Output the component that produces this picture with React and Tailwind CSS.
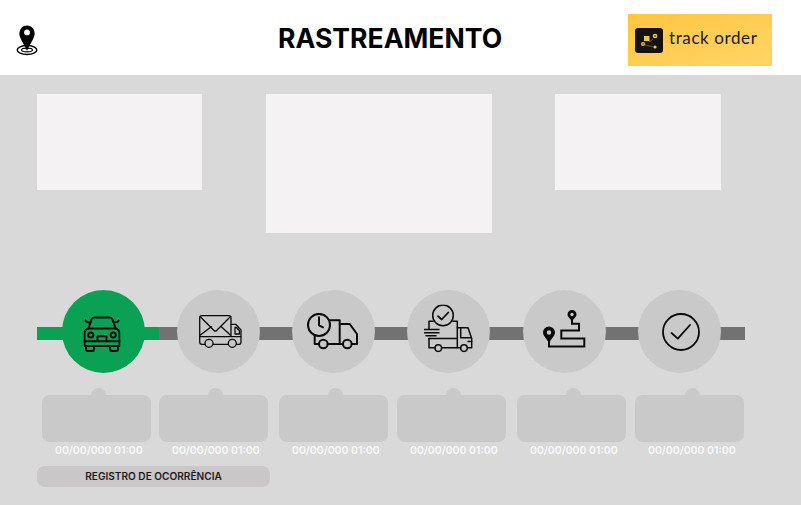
const stroke = { fill: "none", stroke: "#0a0a0a", strokeWidth: 2, strokeLinecap: "round", strokeLinejoin: "round" };

function Car() {
  return (
    <svg width="37" height="36" viewBox="0 0 37 36" {...stroke}>
      <path d="M5 12.500 L8 3.500 Q8.700 1.500 11 1.500 H26 Q28.300 1.500 29 3.500 L32 12.500" />
      <path d="M2 4.500 Q2.500 6.500 6.500 6.500 M35 4.500 Q34.500 6.500 30.500 6.500" />
      <path d="M5 12.500 H32 Q36 13.500 36 18 V30 H1 V18 Q1 13.500 5 12.500 Z" />
      <path d="M1 25.300 H36" />
      <circle cx="7.300" cy="19" r="2.600" />
      <circle cx="29.700" cy="19" r="2.600" />
      <path d="M14 25 V20.300 H23 V25" />
      <path d="M2.500 30 V33 Q2.500 35 4.500 35 H8.500 Q10.500 35 10.500 33 V30" />
      <path d="M26.500 30 V33 Q26.500 35 28.500 35 H32.500 Q34.500 35 34.500 33 V30" />
    </svg>
  );
}

function MailTruck() {
  return (
    <svg width="43" height="33" viewBox="0 0 43 33" {...stroke} strokeWidth="1.300">
      <path d="M0.700 20.700 V2.700 Q0.700 0.700 2.700 0.700 H30 Q32 0.700 32 2.700 V20.700" />
      <path d="M1.300 1.700 L15 15.500 Q16.300 16.800 17.600 15.500 L31.300 1.700" />
      <path d="M1.300 20 L12.300 11.700 M31.300 20 L22.300 11.700" />
      <path d="M0.700 21.700 H41.700" />
      <path d="M0.700 21.700 V27 Q0.700 29.300 3 29.300 H6 M14 29.300 H29.300 M37.300 29.300 H40 Q42 29.300 42 27 V15 L36.700 9.300 H32" />
      <path d="M36 12.500 H37.500 L40.500 16 V19 H36 Z" />
      <circle cx="10" cy="28.300" r="4" />
      <circle cx="33.300" cy="28.300" r="4" />
    </svg>
  );
}

function ClockTruck() {
  return (
    <svg width="51" height="37" viewBox="0 0 51 37" {...stroke}>
      <circle cx="12" cy="11.900" r="11" />
      <path d="M12 4.300 V12.300 L16 14.300" />
      <path d="M22.700 7.300 H32.700 V31 H21 M7.700 22.700 V31 H12" />
      <path d="M32.700 11 H42.700 L50 21 V31 H45" />
      <path d="M32.700 31 H36" />
      <circle cx="16.300" cy="31" r="4.300" />
      <circle cx="40.300" cy="31" r="4.300" />
    </svg>
  );
}

function CheckTruck() {
  return (
    <svg width="49" height="48" viewBox="0 0 49 48" {...stroke} strokeWidth="1.500">
      <circle cx="19" cy="10.900" r="10.300" />
      <path d="M14 11.700 L17.700 15 L24.300 8" strokeWidth="1.800" />
      <path d="M9 16.700 H5 V24 M5 34 V43.300 H11 M17.700 43.300 H36.700 M43.300 43.300 H47.700 V34 L44 23.300 H33.300" />
      <path d="M29 16.700 H33.300 V43.300" />
      <path d="M5 34 H33.300" />
      <path d="M0.500 25 H15 M0.500 28.300 H15 M2 31.300 H12" />
      <path d="M36.700 24 V33.300 H46.500" />
      <path d="M44 37 H47.700" />
      <circle cx="14.300" cy="43.600" r="3.300" />
      <circle cx="40" cy="43.600" r="3.300" />
    </svg>
  );
}

function Route() {
  return (
    <svg width="43" height="39" viewBox="0 0 43 39">
      <path d="M29 10 V14.300 H36 V21 H18.300 V29 H41.300 V37 H6 V30" fill="none" stroke="#0a0a0a" strokeWidth="2" />
      <path fillRule="evenodd" d="M29 0.500 a4.500 4.500 0 0 1 4.500 4.500 c0 2.500 -3 4 -4.500 7 c-1.500 -3 -4.500 -4.500 -4.500 -7 a4.500 4.500 0 0 1 4.500 -4.500z m0 2.800 a1.700 1.700 0 1 0 0 3.400 a1.700 1.700 0 1 0 0 -3.400z" fill="#0a0a0a" />
      <path fillRule="evenodd" d="M6 17 a6 6 0 0 1 6 6 c0 3.500 -4 6.500 -6 10.500 c-2 -4 -6 -7 -6 -10.500 a6 6 0 0 1 6 -6z m0 3.800 a2.200 2.200 0 1 0 0 4.400 a2.200 2.200 0 1 0 0 -4.400z" fill="#0a0a0a" />
    </svg>
  );
}

function Check() {
  return (
    <svg width="38" height="38" viewBox="0 0 38 38" {...stroke} strokeWidth="1.800">
      <circle cx="19" cy="19" r="18" />
      <path d="M9.500 20 L15.800 25.700 L28 12" />
    </svg>
  );
}

function Pin() {
  return (
    <svg width="22" height="31" viewBox="0 0 22 31">
      <ellipse cx="11" cy="25" rx="9.800" ry="4.400" fill="none" stroke="#000" strokeWidth="1.500" />
      <ellipse cx="11" cy="25" rx="5.500" ry="1.900" fill="none" stroke="#000" strokeWidth="1.100" />
      <path fillRule="evenodd" d="M11 0.500 a7.700 7.700 0 0 1 7.700 7.700 c0 5 -5 11 -7.700 17.800 c-2.700 -6.800 -7.700 -12.800 -7.700 -17.800 a7.700 7.700 0 0 1 7.700 -7.700z m0 4 a2.900 2.900 0 1 0 0 5.800 a2.900 2.900 0 1 0 0 -5.800z" fill="#000" />
    </svg>
  );
}

function Logo() {
  return (
    <div className="flex h-[25px] w-[28px] shrink-0 items-center justify-center rounded-[3px] bg-[#14130f]">
      <svg width="28" height="25" viewBox="0 0 28 25">
        <rect x="9" y="8" width="5.500" height="5" fill="#f7c544" />
        <circle cx="20" cy="8" r="2.300" fill="#f7c544" />
        <circle cx="20" cy="8" r="0.800" fill="#14130f" />
        <circle cx="8" cy="16" r="2" fill="#f7c544" />
        <circle cx="8" cy="16" r="0.700" fill="#14130f" />
        <circle cx="20" cy="19" r="1.600" fill="#f7c544" />
        <path d="M10 17 L18 18.500 M14 14 L18 11" fill="none" stroke="#8a7a45" strokeWidth="0.700" />
      </svg>
    </div>
  );
}

function Step({ children, active, shift }) {
  return (
    <div className={`relative z-10 flex h-[83px] w-[83px] shrink-0 items-center justify-center rounded-full ${active ? "bg-[#0aa155]" : "bg-[#c9c9c9]"}`}>
      <div className={`flex ${shift}`}>{children}</div>
    </div>
  );
}

function Seg({ className }) {
  return <div className={`mt-[37px] h-[13px] shrink-0 ${className}`} />;
}

const cards = [
  { place: "", nub: "left-[49px]" },
  { place: "ml-[8px]", nub: "left-[49px]" },
  { place: "ml-[11px]", nub: "left-[49px]" },
  { place: "ml-[9px]", nub: "left-[49px]" },
  { place: "ml-[11px]", nub: "left-[49px]" },
  { place: "ml-[9px]", nub: "left-[50px]" },
];

export default function App() {
  const gray = "bg-[#727272]";
  const green = "bg-[#0aa155]";
  const between = "-mx-[2px] w-[36px] bg-[#727272]";
  return (
    <div className="flex h-[505px] w-[801px] flex-col overflow-hidden bg-[#d9d9d9] [font-family:Inter,sans-serif]">
      <header className="relative flex h-[75px] shrink-0 items-start justify-between bg-white pl-[16px] pr-[29px]">
        <div className="pt-[25px]"><Pin /></div>
        <h1 className="absolute left-[278px] top-[22px] text-[26.600px] font-bold leading-[32px] text-black">RASTREAMENTO</h1>
        <div className="mt-[14px] flex h-[52px] w-[144px] items-center gap-[6px] bg-gradient-to-br from-[#ffc53f] to-[#ffd566] pl-[7px]">
          <Logo />
          <span className="-translate-y-[2px] [font-family:Lato,sans-serif] text-[17px] tracking-[0.600px] text-[#1a1a1a]">track order</span>
        </div>
      </header>

      <section className="flex items-start pl-[37px] pt-[19px]">
        <div className="h-[96px] w-[165px] bg-[#f4f2f3]" />
        <div className="ml-[64px] h-[139px] w-[226px] bg-[#f4f2f3]" />
        <div className="ml-[63px] h-[96px] w-[166px] bg-[#f4f2f3]" />
      </section>

      <section className="mt-[57px] flex items-start pl-[37px]">
        <Seg className={`-mr-[2px] w-[27px] ${green}`} />
        <Step active shift="-translate-x-[1.500px] translate-y-[2px]"><Car /></Step>
        <Seg className={`-ml-[2px] w-[16px] ${green}`} />
        <Seg className={`-mr-[2px] w-[20px] ${gray}`} />
        <Step shift="translate-x-[2px]"><MailTruck /></Step>
        <Seg className={between} />
        <Step shift="-translate-x-[1px]"><ClockTruck /></Step>
        <Seg className={between} />
        <Step shift="-translate-y-[3.500px]"><CheckTruck /></Step>
        <Seg className={`-mx-[2px] w-[37px] ${gray}`} />
        <Step shift="-translate-y-[2.500px]"><Route /></Step>
        <Seg className={between} />
        <Step shift="translate-x-[1px]"><Check /></Step>
        <Seg className={`-ml-[2px] w-[26px] ${gray}`} />
      </section>

      <section className="mt-[15px] flex pl-[42px]">
        {cards.map((c, i) => (
          <div key={i} className={`flex w-[109px] shrink-0 flex-col ${c.place}`}>
            <div className="relative mt-[7px] h-[47px] w-full rounded-[8px] bg-[#c9c9c9]">
              <div className={`absolute top-[-7px] h-[15px] w-[15px] rounded-full bg-[#c9c9c9] ${c.nub}`} />
            </div>
            <span className="ml-[13px] mt-[1px] whitespace-nowrap text-[10.500px] font-semibold leading-[16px] text-[#f8f8f8]">00/00/000 01:00</span>
          </div>
        ))}
      </section>

      <div className="ml-[37px] mt-[7px] flex h-[21px] w-[233px] items-center justify-center rounded-[8px] bg-[#c9c7c8]">
        <span className="text-[10.100px] font-semibold text-[#1c1c1c]">REGISTRO DE OCORRÊNCIA</span>
      </div>
    </div>
  );
}
